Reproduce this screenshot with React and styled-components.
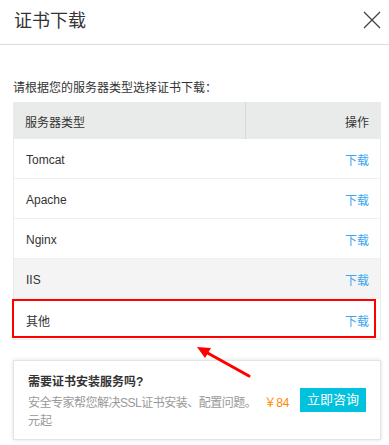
import styled, { createGlobalStyle } from "styled-components";

const GlobalStyle = createGlobalStyle`
  body {
    margin: 0;
    background: #fff;
    font-family: "Liberation Sans", "Noto Sans CJK SC", sans-serif;
    color: #333;
  }
`;

const Dialog = styled.div`
  position: relative;
  width: 389px;
  height: 445px;
  overflow: hidden;
  background: #fff;
`;

const Header = styled.div`
  display: flex;
  align-items: center;
  justify-content: space-between;
  height: 45px;
  padding: 0 7px 0 14px;
  border-bottom: 1px solid #dcdcdc;
  box-sizing: border-box;
`;

const Title = styled.h1`
  margin: -3px 0 0;
  font-size: 18px;
  font-weight: 400;
  line-height: 24px;
  color: #333;
`;

const CloseButton = styled.button`
  display: flex;
  width: 20px;
  height: 20px;
  padding: 0;
  border: none;
  background: none;
  margin-top: -4px;
`;

const Body = styled.div`
  padding: 34px 8px 0 13px;
`;

const Hint = styled.p`
  margin: 0 0 5px;
  font-size: 12px;
  line-height: 18px;
  color: #333;
`;

const Table = styled.div`
  border: 1px solid #ebebeb;
  border-top: none;
`;

const HeadRow = styled.div`
  display: grid;
  grid-template-columns: 231px 1fr;
  height: 37px;
  background: #e9ebea;
  font-size: 12px;
`;

const HeadCell = styled.div`
  display: flex;
  align-items: center;
  justify-content: ${(p) => (p.$right ? "flex-end" : "flex-start")};
  padding: ${(p) => (p.$right ? "1px 11px 0 0" : "1px 0 0 11px")};
  border-left: ${(p) => (p.$right ? "1px solid #d8d8d8" : "none")};
`;

const Row = styled.div`
  position: relative;
  display: flex;
  align-items: center;
  justify-content: space-between;
  height: 40px;
  padding: 2px 11px 0 12px;
  box-sizing: border-box;
  font-size: 12px;
  background: ${(p) => (p.$hover ? "#f4f4f4" : "#fff")};
  &:not(:last-child) {
    border-bottom: 1px solid #f0f0f0;
  }
  ${(p) =>
    p.$marked &&
    `
    &::after {
      content: "";
      position: absolute;
      left: -2px;
      top: 0;
      width: 364px;
      height: 39px;
      border: 2px solid #f00;
      box-sizing: border-box;
    }
  `}
`;

const Name = styled.span`
  color: #333;
`;

const DownloadLink = styled.a`
  color: #3ca6f0;
  text-decoration: none;
`;

const Promo = styled.div`
  display: flex;
  align-items: center;
  justify-content: space-between;
  margin: 20px 0 0;
  height: 80px;
  padding: 0 14px;
  box-sizing: border-box;
  border: 1px solid #e4e4e4;
  box-shadow: 0 0 4px rgba(0, 0, 0, 0.12);
`;

const PromoText = styled.div`
  width: 268px;
  flex-shrink: 0;
  margin-top: 3px;
  font-size: 12px;
  line-height: 18px;
`;

const PromoTitle = styled.div`
  font-weight: 700;
  color: #333;
  margin-bottom: 3px;
`;

const PromoDesc = styled.div`
  color: #999;
`;

const NoWrap = styled.span`
  white-space: nowrap;
  letter-spacing: -0.5px;
`;

const Price = styled.span`
  color: #ff8a00;
  margin-left: 8px;
  letter-spacing: 0;
`;

const ConsultButton = styled.button`
  width: 66px;
  height: 24px;
  padding: 0;
  border: none;
  background: #00c1de;
  color: #fff;
  font-family: inherit;
  font-size: 13px;
  line-height: 24px;
`;

const Arrow = styled.svg`
  position: absolute;
  left: 194px;
  top: 343px;
`;

const servers = ["Tomcat", "Apache", "Nginx", "IIS", "其他"];

export default function App() {
  return (
    <>
      <GlobalStyle />
      <Dialog>
        <Header>
          <Title>证书下载</Title>
          <CloseButton aria-label="close">
            <svg width="20" height="20" viewBox="0 0 20 20">
              <path d="M2 2 L18 18 M18 2 L2 18" stroke="#444" strokeWidth="1.3" fill="none" />
            </svg>
          </CloseButton>
        </Header>
        <Body>
          <Hint>请根据您的服务器类型选择证书下载：</Hint>
          <Table>
            <HeadRow>
              <HeadCell>服务器类型</HeadCell>
              <HeadCell $right>操作</HeadCell>
            </HeadRow>
            {servers.map((s) => (
              <Row key={s} $hover={s === "IIS"} $marked={s === "其他"}>
                <Name>{s}</Name>
                <DownloadLink href="#">下载</DownloadLink>
              </Row>
            ))}
          </Table>
          <Promo>
            <PromoText>
              <PromoTitle>需要证书安装服务吗?</PromoTitle>
              <PromoDesc>
                <NoWrap>
                  安全专家帮您解决SSL证书安装、配置问题。<Price>￥84</Price>
                </NoWrap>{" "}
                元起
              </PromoDesc>
            </PromoText>
            <ConsultButton>立即咨询</ConsultButton>
          </Promo>
        </Body>
        <Arrow width="60" height="38" viewBox="0 0 60 38">
          <line x1="55" y1="33" x2="10" y2="8" stroke="#f00" strokeWidth="3" strokeLinecap="round" />
          <polygon points="3,4 17,5 11,15" fill="#f00" />
        </Arrow>
      </Dialog>
    </>
  );
}
